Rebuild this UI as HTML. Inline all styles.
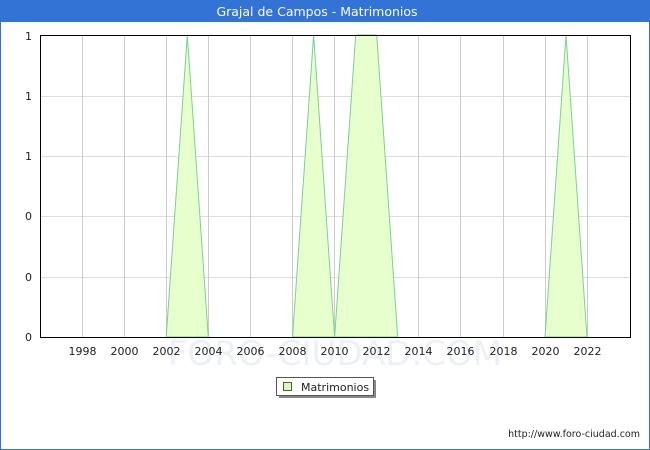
<!DOCTYPE html>
<html><head><style>
body{margin:0;width:650px;height:450px;overflow:hidden;font-family:"DejaVu Sans","Liberation Sans",sans-serif;}
</style></head><body>
<svg width="650" height="450" xmlns="http://www.w3.org/2000/svg" style="display:block">
<rect x="0" y="0" width="650" height="450" fill="#fff"/>
<rect x="0.5" y="0.5" width="649" height="449" fill="none" stroke="#3373d6"/>
<rect x="0" y="0" width="650" height="22" fill="#3373d6"/>
<text x="317" y="16" fill="#fff" font-size="12.5" text-anchor="middle" font-family="DejaVu Sans, sans-serif">Grajal de Campos - Matrimonios</text>
<text x="335" y="365" fill="#eef0f8" font-size="34" text-anchor="middle" font-family="DejaVu Sans, sans-serif">FORO-CIUDAD.COM</text>
<g stroke="#ddd" stroke-width="1">
<line x1="40" y1="96.5" x2="630" y2="96.5"/>
<line x1="40" y1="156.5" x2="630" y2="156.5"/>
<line x1="40" y1="216.5" x2="630" y2="216.5"/>
<line x1="40" y1="277.5" x2="630" y2="277.5"/>
</g>
<g stroke="#ccc" stroke-width="1">
<line x1="82.5" y1="35" x2="82.5" y2="337"/><line x1="124.5" y1="35" x2="124.5" y2="337"/>
<line x1="166.5" y1="35" x2="166.5" y2="337"/><line x1="208.5" y1="35" x2="208.5" y2="337"/>
<line x1="250.5" y1="35" x2="250.5" y2="337"/><line x1="292.5" y1="35" x2="292.5" y2="337"/>
<line x1="334.5" y1="35" x2="334.5" y2="337"/><line x1="376.5" y1="35" x2="376.5" y2="337"/>
<line x1="418.5" y1="35" x2="418.5" y2="337"/><line x1="460.5" y1="35" x2="460.5" y2="337"/>
<line x1="503.5" y1="35" x2="503.5" y2="337"/><line x1="545.5" y1="35" x2="545.5" y2="337"/>
<line x1="587.5" y1="35" x2="587.5" y2="337"/>
</g>
<g fill="#e6ffcc" stroke="#7ccf99" stroke-width="1">
<polygon points="166.2,337 187.3,35 208.3,337"/>
<polygon points="292.5,337 313.6,35 334.6,337"/>
<polygon points="334.6,337 355.7,35 376.7,35 397.7,337"/>
<polygon points="545,337 566,35 587,337"/>
</g>
<rect x="40.5" y="35.5" width="590" height="302" fill="none" stroke="#000"/>
<g font-size="11" fill="#222" text-anchor="end">
<text x="32" y="40">1</text><text x="32" y="100">1</text><text x="32" y="160">1</text>
<text x="32" y="220">0</text><text x="32" y="281">0</text><text x="32" y="341">0</text>
</g>
<g font-size="11" fill="#222" text-anchor="middle">
<text x="82.5" y="355">1998</text><text x="124.5" y="355">2000</text><text x="166.5" y="355">2002</text>
<text x="208.5" y="355">2004</text><text x="250.5" y="355">2006</text><text x="292.5" y="355">2008</text>
<text x="334.5" y="355">2010</text><text x="376.5" y="355">2012</text><text x="418.5" y="355">2014</text>
<text x="460.5" y="355">2016</text><text x="503.5" y="355">2018</text><text x="545.5" y="355">2020</text>
<text x="587.5" y="355">2022</text>
</g>
<rect x="279" y="380" width="97" height="18" fill="#888"/>
<rect x="276.5" y="377.5" width="97" height="18" fill="#fff" stroke="#555"/>
<rect x="283.5" y="382.5" width="8" height="8" fill="#d8ffb0" stroke="#555"/>
<text x="301" y="391" font-size="11" fill="#222">Matrimonios</text>
<text x="640" y="437" font-size="9.5" fill="#222" text-anchor="end">http://www.foro-ciudad.com</text>
</svg>
</body></html>
